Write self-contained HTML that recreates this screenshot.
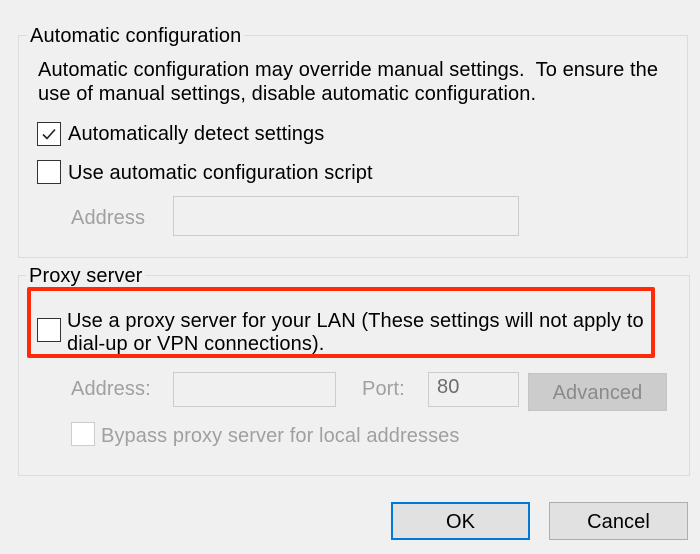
<!DOCTYPE html>
<html><head><style>
body{margin:0;width:700px;height:554px;background:#f0f0f0;font-family:"Liberation Sans",sans-serif;font-size:20px;letter-spacing:0.1px;color:#000;position:relative;overflow:hidden}
.a{position:absolute;white-space:nowrap}
.g{position:absolute;border:1px solid #dcdcdc}
.lg{position:absolute;background:#f0f0f0;padding:0 3px;white-space:nowrap}
.cb{position:absolute;width:22px;height:22px;border:1px solid #333;background:#fff}
.cbd{position:absolute;width:22px;height:22px;border:1px solid #ccc;background:#fff}
.f{position:absolute;border:1px solid #ccc;background:#f0f0f0}
.dis{color:#a0a0a0}
.btn{position:absolute;background:#e1e1e1;border:1px solid #adadad;text-align:center;box-sizing:border-box}
</style></head><body>
<div class="g" style="left:18px;top:35px;width:668px;height:221px"></div>
<div class="lg" style="left:27px;top:25px">Automatic configuration</div>
<div class="a" style="left:38px;top:59px">Automatic configuration may override manual settings.&nbsp; To ensure the</div>
<div class="a" style="left:38px;top:83px">use of manual settings, disable automatic configuration.</div>
<div class="cb" style="left:37px;top:122px"></div>
<svg class="a" style="left:37px;top:122px" width="24" height="24"><path d="M6 12.5l4 4 8-9" fill="none" stroke="#222" stroke-width="1.6"/></svg>
<div class="a" style="left:68px;top:123px">Automatically detect settings</div>
<div class="cb" style="left:37px;top:160px"></div>
<div class="a" style="left:68px;top:162px">Use automatic configuration script</div>
<div class="a dis" style="left:71px;top:207px">Address</div>
<div class="f" style="left:173px;top:196px;width:344px;height:38px"></div>

<div class="g" style="left:18px;top:275px;width:670px;height:199px"></div>
<div class="lg" style="left:26px;top:265px">Proxy server</div>
<div style="position:absolute;left:27px;top:287px;width:620px;height:63px;border:4px solid #ff2a0a;border-radius:2px"></div>
<div class="cb" style="left:37px;top:318px"></div>
<div class="a" style="left:67px;top:310px">Use a proxy server for your LAN (These settings will not apply to</div>
<div class="a" style="left:67px;top:333px">dial-up or VPN connections).</div>
<div class="a dis" style="left:71px;top:378px">Address:</div>
<div class="f" style="left:173px;top:372px;width:161px;height:33px"></div>
<div class="a dis" style="left:362px;top:378px">Port:</div>
<div class="f" style="left:428px;top:372px;width:89px;height:33px"></div>
<div class="a" style="left:437px;top:376px;color:#6d6d6d">80</div>
<div class="btn" style="left:528px;top:373px;width:139px;height:38px;background:#cccccc;border-color:#c4c4c4;color:#8a8a8a;line-height:38px">Advanced</div>
<div class="cbd" style="left:71px;top:422px"></div>
<div class="a dis" style="left:101px;top:425px">Bypass proxy server for local addresses</div>

<div class="btn" style="left:391px;top:502px;width:139px;height:38px;border:2px solid #0078d7;line-height:36px">OK</div>
<div class="btn" style="left:549px;top:502px;width:139px;height:38px;line-height:38px">Cancel</div>
</body></html>
